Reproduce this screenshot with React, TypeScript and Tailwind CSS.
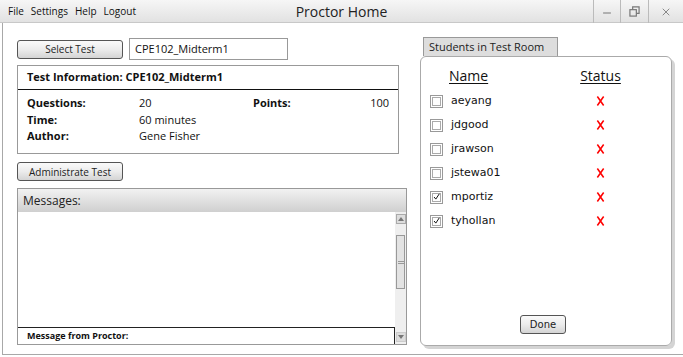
import { Minus, X } from "lucide-react";

const ui = "font-['Open_Sans',sans-serif]";
const btnCls =
  "flex items-center justify-center rounded-[3px] border border-[#555] bg-gradient-to-b from-[#fafafa] via-[#ececec] to-[#d4d4d4] text-[10px] text-[#222] leading-none";

const students = [
  { name: "aeyang", present: false },
  { name: "jdgood", present: false },
  { name: "jrawson", present: false },
  { name: "jstewa01", present: false },
  { name: "mportiz", present: true },
  { name: "tyhollan", present: true },
];

function Checkbox({ checked }: { checked: boolean }) {
  return (
    <span className="flex h-[13px] w-[13px] items-center justify-center border border-[#999] bg-white p-[1px]">
      <span className="flex h-full w-full items-center justify-center border border-[#aaa]">
        {checked && (
          <svg viewBox="0 0 10 10" className="h-[10px] w-[10px]">
            <path d="M1.5 5 L4 8 L9 0.5" fill="none" stroke="#111" strokeWidth="1.4" />
          </svg>
        )}
      </span>
    </span>
  );
}

function RedX() {
  return (
    <svg viewBox="0 0 10 12" className="h-[12px] w-[9px]">
      <path d="M1.5 1 L8.5 11 M8.5 1 L1.5 11" stroke="#f00" strokeWidth="1.7" fill="none" />
    </svg>
  );
}

export default function App() {
  return (
    <div className={`${ui} relative h-[357px] w-[683px] overflow-hidden bg-white text-[#111]`}>
      {/* title bar */}
      <div className="flex h-[23px] items-center border-b border-[#c8c8c8] bg-gradient-to-b from-[#f6f6f6] to-[#e2e2e2]">
        <div className="flex w-[240px] gap-[7px] pl-[8px] text-[10px]">
          <span>File</span>
          <span>Settings</span>
          <span>Help</span>
          <span>Logout</span>
        </div>
        <div className="flex-1 text-center text-[14px] text-[#222]">Proctor Home</div>
        <div className="flex h-[23px] w-[240px] justify-end self-start">
          <div className="flex h-[23px] w-[27px] items-end justify-center border-l border-[#bbb] pb-[4px] text-[#777]">
            <Minus className="h-3 w-3" strokeWidth={2} />
          </div>
          <div className="flex h-[23px] w-[28px] items-center justify-center border-l border-[#bbb] text-[#777]">
            <svg viewBox="0 0 12 12" className="h-[11px] w-[11px]">
              <rect x="1" y="4" width="7" height="7" fill="none" stroke="#777" strokeWidth="1.3" />
              <path d="M4 4 V1 H11 V8 H8" fill="none" stroke="#777" strokeWidth="1.3" />
            </svg>
          </div>
          <div className="flex h-[23px] w-[35px] items-center justify-center border-l border-[#bbb] text-[#888]">
            <X className="h-3 w-3" strokeWidth={2} />
          </div>
        </div>
      </div>

      {/* window body */}
      <div className="ml-[2px] flex h-[332px] w-[690px] border-b border-l border-[#a8a8a8]">
        {/* left column */}
        <div className="ml-[14px] flex w-[390px] flex-col pt-[15px]">
          <div className="flex items-center gap-[6px]">
            <button className={`${btnCls} h-[19px] w-[106px]`}>Select Test</button>
            <div className="flex h-[22px] w-[159px] items-center border border-[#999] pl-[5px] text-[11px]">
              CPE102_Midterm1
            </div>
          </div>

          <div className="mt-[5px] h-[89px] w-[382px] border border-[#999]">
            <div className="flex h-[24px] items-center border-b border-[#111] pl-[9px] text-[11px] font-bold">
              Test Information: CPE102_Midterm1
            </div>
            <div className="grid grid-cols-[112px_114px_1fr] px-[9px] pt-[5px] text-[11px] leading-[16.5px]">
              <span className="font-bold">Questions:</span>
              <span>20</span>
              <span className="flex justify-between font-bold">
                Points:<span className="font-normal">100</span>
              </span>
              <span className="font-bold">Time:</span>
              <span>60 minutes</span>
              <span />
              <span className="font-bold">Author:</span>
              <span>Gene Fisher</span>
              <span />
            </div>
          </div>

          <button className={`${btnCls} mt-[8px] h-[19px] w-[106px]`}>Administrate Test</button>

          <div className="mt-[7px] flex h-[157px] w-[390px] flex-col border border-[#999]">
            <div className="flex h-[23px] items-center bg-gradient-to-b from-[#f2f2f2] to-[#cfcfcf] pl-[5px] text-[12px] text-[#222]">
              Messages:
            </div>
            <div className="flex flex-1">
              <div className="flex flex-1 flex-col justify-end">
                <div className="flex h-[17px] items-center border-t border-r border-[#222] pl-[9px] text-[9px] font-bold">
                  Message from Proctor:
                </div>
              </div>
              <div className="flex w-[11px] flex-col items-center bg-[#efefef]">
                <div className="mt-[2px] flex h-[10px] w-[10px] items-center justify-center border border-[#aaa] bg-[#ddd]">
                  <span className="h-0 w-0 border-x-[3px] border-b-[4px] border-x-transparent border-b-[#777]" />
                </div>
                <div className="mt-[11px] flex h-[54px] w-[9px] items-center justify-center border border-[#999] bg-[#e3e3e3]">
                  <span className="h-[3px] w-[6px] border-y border-[#999]" />
                </div>
                <div className="flex-1" />
                <div className="mb-[2px] flex h-[10px] w-[10px] items-center justify-center border border-[#ccc] bg-[#ddd]">
                  <span className="h-0 w-0 border-x-[3px] border-t-[4px] border-x-transparent border-t-[#777]" />
                </div>
              </div>
            </div>
          </div>
        </div>

        {/* right column */}
        <div className="ml-[13px] flex flex-col pt-[14px]">
          <div className="ml-[3px] flex h-[19px] w-[135px] items-center border border-b-0 border-[#999] bg-[#ddd] pl-[5px] text-[11px] text-[#222]">
            Students in Test Room
          </div>
          <div className="flex h-[290px] w-[252px] flex-col rounded-[6px] border border-[#aaa] shadow-[3px_3px_0_#d4d4d4]">
            <div className="flex pt-[12px] text-[14px] text-[#111] leading-none">
              <span className="ml-[28px] underline underline-offset-2">Name</span>
              <span className="ml-[92px] underline underline-offset-2">Status</span>
            </div>
            <div className="mt-[9px] flex flex-col gap-[6px] pl-[9px] font-['DejaVu_Sans',sans-serif] text-[11px]">
              {students.map((s) => (
                <div key={s.name} className="flex h-[18px] items-center">
                  <Checkbox checked={s.present} />
                  <span className="ml-[8px] w-[145px]">{s.name}</span>
                  <RedX />
                </div>
              ))}
            </div>
            <div className="flex-1" />
            <div className="mb-[11px] flex justify-center">
              <button className={`${btnCls} mr-[6px] h-[19px] w-[46px] font-['DejaVu_Sans',sans-serif]`}>
                Done
              </button>
            </div>
          </div>
        </div>
      </div>
    </div>
  );
}
